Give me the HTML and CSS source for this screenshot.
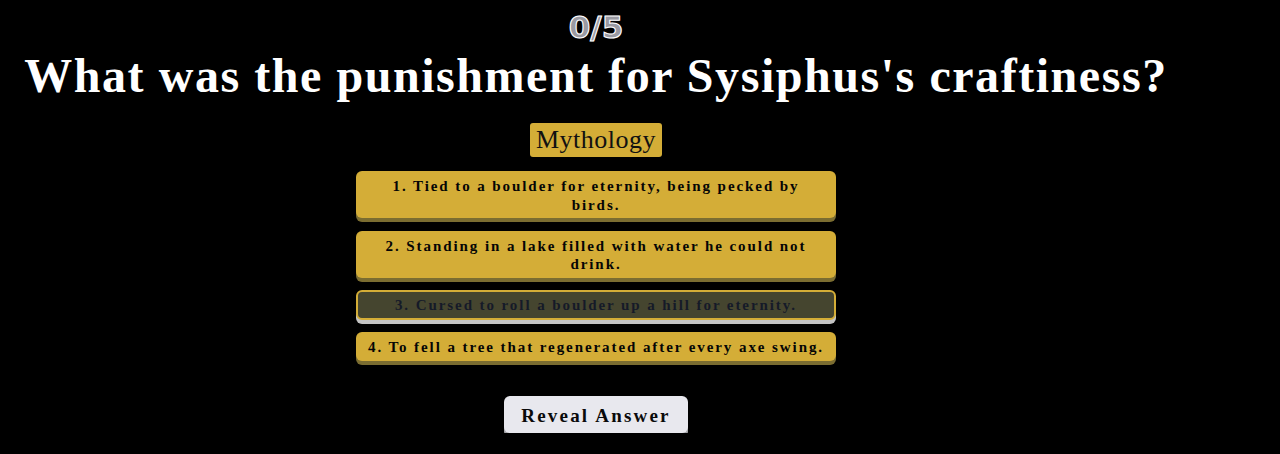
FILE: index.html
```html
<!DOCTYPE html>
<html>
<head>
<meta charset="utf-8">
<link rel="stylesheet" href="styles.css">
</head>
<body>
<div class="page">
  <div class="score">0/5</div>
  <h1 class="question">What was the punishment for Sysiphus's craftiness?</h1>
  <div class="category-row"><span class="category">Mythology</span></div>
  <div class="options">
    <button class="option">1. Tied to a boulder for eternity, being pecked by birds.</button>
    <button class="option">2. Standing in a lake filled with water he could not drink.</button>
    <button class="option selected">3. Cursed to roll a boulder up a hill for eternity.</button>
    <button class="option">4. To fell a tree that regenerated after every axe swing.</button>
  </div>
  <div class="reveal-row"><button class="reveal">Reveal Answer</button></div>
</div>
</body>
</html>
```
FILE: styles.css
```css
html, body {
  background: #000;
  margin: 0;
}
body {
  margin: 8px;
}
.page {
  width: 1176px;
  display: flex;
  flex-direction: column;
  align-items: center;
}
.score {
  font-family: "DejaVu Sans", sans-serif;
  font-weight: bold;
  font-size: 31px;
  line-height: 38px;
  color: #9a9aa2;
  -webkit-text-stroke: 1px #ffffff;
  text-shadow: 0 0 1px #c8d8ff;
}
.question {
  font-family: "Liberation Serif", serif;
  font-weight: bold;
  font-size: 48px;
  letter-spacing: 1.55px;
  line-height: 56px;
  color: #fff;
  margin: 2px 0 19px 0;
  text-align: center;
  white-space: nowrap;
}
.category-row {
  display: flex;
  justify-content: center;
}
.category {
  font-family: "Liberation Serif", serif;
  font-size: 26px;
  letter-spacing: 0.5px;
  line-height: 34px;
  padding: 0 6px;
  background: #d4ad37;
  color: #111;
  border-radius: 3px;
}
.options {
  display: flex;
  flex-direction: column;
  gap: 12.5px;
  margin-top: 14px;
  width: 480px;
}
.option {
  font-family: "Liberation Serif", serif;
  font-weight: bold;
  font-size: 15px;
  letter-spacing: 1.92px;
  line-height: 18.5px;
  color: #050505;
  background: #d4ad37;
  border: none;
  border-radius: 6px;
  padding: 6px 11px 4px;
  box-shadow: 0 4px 0 #7b6d31;
  text-align: center;
  width: 100%;
}
.option.selected {
  background: #45452f;
  border: 2px solid #d4ad37;
  padding: 4px 9px 3px;
  color: #151a28;
  box-shadow: 0 4px 0 #c4c4c4;
}
.reveal-row {
  margin-top: 35px;
  display: flex;
  justify-content: center;
}
.reveal {
  font-family: "Liberation Serif", serif;
  font-weight: bold;
  font-size: 19px;
  letter-spacing: 2.2px;
  line-height: 22px;
  color: #0a0a0a;
  background: #e8e8ee;
  border: none;
  border-radius: 6px;
  padding: 9px 17px 6px;
  box-shadow: 0 4px 0 #a8a8ac;
}
```
